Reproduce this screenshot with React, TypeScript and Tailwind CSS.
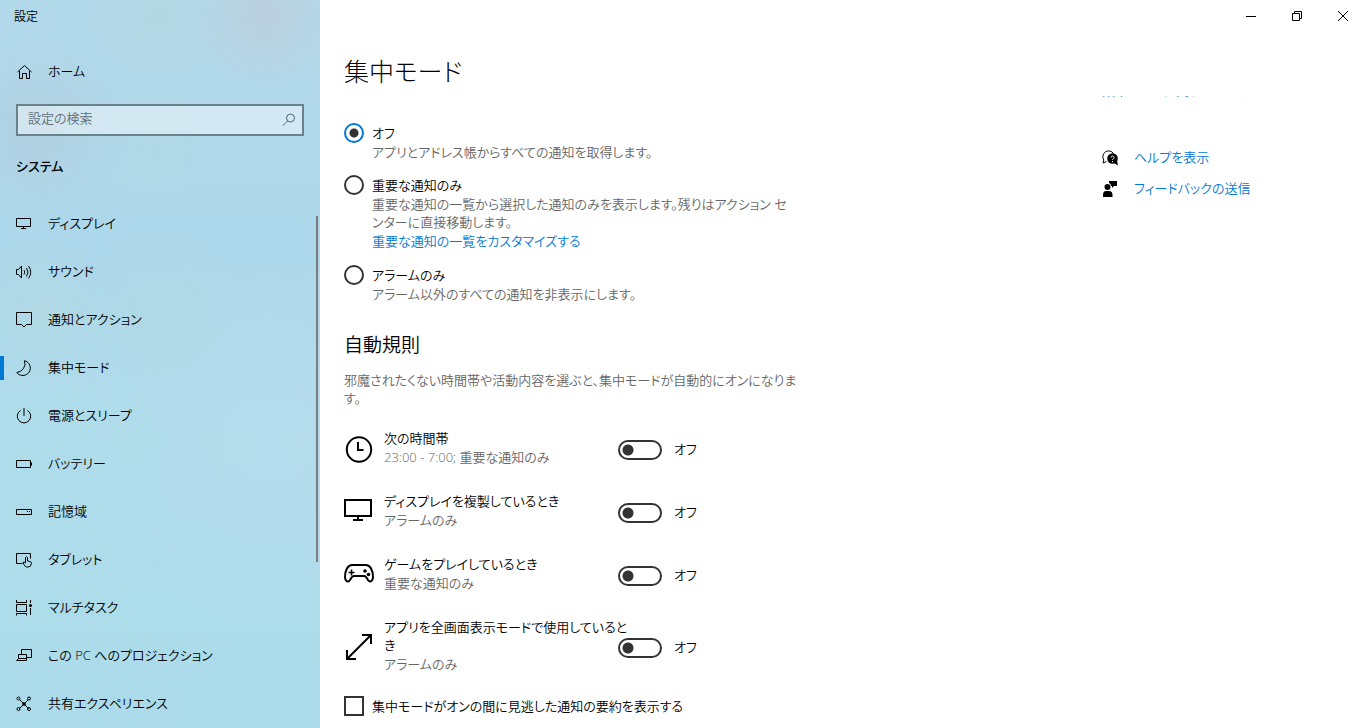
import type { ReactNode } from "react";

const svg = {
  fill: "none",
  stroke: "currentColor",
  "aria-hidden": true,
} as const;

function NavIcon({ children }: { children: ReactNode }) {
  return (
    <svg {...svg} width="16" height="16" viewBox="0 0 16 16" className="shrink-0 overflow-visible">
      {children}
    </svg>
  );
}

const navItems: { label: string; icon: ReactNode; active?: boolean }[] = [
  {
    label: "ディスプレイ",
    icon: <path d="M.5 2.5h14v8H.5zM7.500 10.500v2M5 12.500h5" />,
  },
  {
    label: "サウンド",
    icon: (
      <path d="M.5 5.500h2l3-3.500v12l-3-3.500h-2zM8 6q1.500 2 0 4.500M10.500 4q3 4 0 8.500M12.500 2q4.500 6 0 12.500" />
    ),
  },
  {
    label: "通知とアクション",
    icon: <path d="M.5.500h15v12h-5l-2.500 2.500-2.500-2.500h-5z" />,
  },
  {
    label: "集中モード",
    active: true,
    icon: <path d="M8.500.700A7.500 7.500 0 1 1 .800 12.500Q5 12 7.500 8.500T8.500.700z" />,
  },
  {
    label: "電源とスリープ",
    icon: <path d="M8 0v8M4.500 2.500a6.700 6.700 0 1 0 7 0" />,
  },
  {
    label: "バッテリー",
    icon: <path d="M.5 4.500h14v7H.5zM15.500 6.500v3" />,
  },
  {
    label: "記憶域",
    icon: <path d="M.5 5.500h15v5H.5zM11 7.500h1M13 7.500h1" />,
  },
  {
    label: "タブレット",
    icon: (
      <path d="M6.500 11.500h-6v-10h14v5M9.500 11V5.500q1-1.500 2 0V9l3 .700q1 .300 1 1.500-.200 4-4 4-2.300 0-3.500-2.500L7 10.500q1-1.200 2.500.500" />
    ),
  },
  {
    label: "マルチタスク",
    icon: (
      <>
        <path d="M.5 0v2.500h10V0M.5 4.500h10v7H.5zM.5 15.500v-2h10v2M14.500 0v3M14.500 8v7" />
        <circle cx="14.500" cy="5.500" r="1.500" fill="currentColor" stroke="none" />
      </>
    ),
  },
  {
    label: "この PC へのプロジェクション",
    icon: <path d="M5.500 6V1.500h10v8h-5M2.500 6.500h8v4h-8zM2.500 10.500l-2 2h10v-2" />,
  },
  {
    label: "共有エクスペリエンス",
    icon: (
      <>
        <path d="M3.500 3.500l9 9M12.500 3.500l-9 9" />
        <circle cx="2.500" cy="2.500" r="1.500" />
        <circle cx="13" cy="2.500" r="1.500" />
        <circle cx="2.500" cy="13" r="1.500" />
        <circle cx="13" cy="13" r="1.500" />
        <circle cx="8" cy="8" r="1.300" fill="currentColor" />
      </>
    ),
  },
];

const modes = [
  { id: "off", label: "オフ", text: <>アプリとアドレス帳からすべての通知を取得します。</> },
  {
    id: "priority",
    label: "重要な通知のみ",
    text: (
      <>
        重要な通知の一覧から選択した通知のみを表示します。残りはアクション セ
        <br />
        ンターに直接移動します。
      </>
    ),
    link: "重要な通知の一覧をカスタマイズする",
  },
  { id: "alarms", label: "アラームのみ", text: <>アラーム以外のすべての通知を非表示にします。</> },
];

const rules = [
  {
    id: "time",
    label: <>次の時間帯</>,
    sub: "23:00 - 7:00; 重要な通知のみ",
    icon: (
      <>
        <circle cx="15" cy="16.500" r="12.200" />
        <path d="M14 9v8h5.500" />
      </>
    ),
  },
  {
    id: "display",
    label: <>ディスプレイを複製しているとき</>,
    sub: "アラームのみ",
    icon: <path d="M1 4h26v16H1zM14 20v4M9 24h10" />,
  },
  {
    id: "game",
    label: <>ゲームをプレイしているとき</>,
    sub: "重要な通知のみ",
    icon: (
      <>
        <path d="M8 6h14c4 0 7 5 7 12 0 4-3 6-5 3-2-4-3-4-4-4H10c-1 0-2 0-4 4-2 3-5 1-5-3C1 11 4 6 8 6z" />
        <path d="M4.500 13.500h6M7.500 10.500v6" strokeWidth="1.600" />
        <circle cx="21" cy="12" r="1.800" fill="currentColor" stroke="none" />
        <circle cx="24.500" cy="15.500" r="1.800" fill="currentColor" stroke="none" />
      </>
    ),
  },
  {
    id: "fullscreen",
    label: (
      <>
        アプリを全画面表示モードで使用していると
        <br />き
      </>
    ),
    sub: "アラームのみ",
    icon: <path d="M3 28L27 4M18 4h9v9M3 19v9h9" />,
  },
];

function Sidebar() {
  return (
    <aside className="relative flex w-80 shrink-0 flex-col bg-[#afd9ea] bg-[radial-gradient(circle_at_265px_15px,#bbcfdd_0,transparent_75px),radial-gradient(circle_at_160px_15px,#b3d7e2_0,transparent_80px),radial-gradient(circle_at_35px_130px,#b0d0e1_0,transparent_90px),radial-gradient(circle_at_155px_150px,#b0d8e4_0,transparent_60px),radial-gradient(circle_at_40px_310px,#b1d9e5_0,transparent_70px),radial-gradient(circle_at_160px_310px,#b0d9e5_0,transparent_80px),radial-gradient(circle_at_270px_440px,#b5dcec_0,transparent_200px),linear-gradient(#b2d9ea,#add7ea_35%,#afdcea_60%,#abdbea)]">
      <div className="flex h-8 items-center pt-0.5 pl-3.5 text-xs">設定</div>
      <a href="#home" className="mt-4 flex h-12 items-center gap-4 pl-4">
        <svg {...svg} width="16" height="16" viewBox="-1 0 16 16">
          <path d="M.5 8l7-6.500 7 6.500M2.500 7v7.500h3V9.500h4v5h3V7" />
        </svg>
        ホーム
      </a>
      <div className="relative mx-4 mt-2">
        <input
          type="search"
          aria-label="設定の検索"
          placeholder="設定の検索"
          className="h-8 w-full border-2 border-[#6b818c] bg-white/45 px-2.5 pb-1 outline-none placeholder:text-[#5e6e76]"
        />
        <svg {...svg} width="14" height="14" viewBox="0 0 14 14" className="absolute top-[9px] right-2 text-[#54646c]">
          <circle cx="8.500" cy="5" r="4" />
          <path d="M5.600 8L.800 12.800" />
        </svg>
      </div>
      <h2 className="mt-[18px] pl-4 leading-6 font-medium">システム</h2>
      <nav className="mt-[22px]">
        {navItems.map((item) => (
          <a
            key={item.label}
            href="#settings"
            className={
              item.active
                ? "flex h-12 items-center bg-[linear-gradient(#0078d7,#0078d7)] bg-[length:4px_24px] bg-[position:left_center] bg-no-repeat pl-4"
                : "flex h-12 items-center pl-4"
            }
          >
            <NavIcon>{item.icon}</NavIcon>
            <span className="pl-4">{item.label}</span>
          </a>
        ))}
      </nav>
      <div className="absolute top-[216px] right-0.5 h-[346px] w-0.5 bg-[#7a7d80]" />
    </aside>
  );
}

function WindowButtons() {
  return (
    <div className="flex h-8 justify-end">
      <button type="button" aria-label="最小化" className="flex w-[46px] items-center justify-center">
        <svg {...svg} width="10" height="10">
          <path d="M0 5.500h10" />
        </svg>
      </button>
      <button type="button" aria-label="元に戻す" className="flex w-[46px] items-center justify-center">
        <svg {...svg} width="10" height="10">
          <path d="M.5 2.500h7v7h-7zM2.500 2.500v-2h7v7h-2" />
        </svg>
      </button>
      <button type="button" aria-label="閉じる" className="flex w-[46px] items-center justify-center">
        <svg {...svg} width="10" height="10">
          <path d="M0 0l10 10M10 0L0 10" />
        </svg>
      </button>
    </div>
  );
}

function Modes() {
  return (
    <div className="flex flex-col gap-3.5">
      {modes.map((mode) => (
        <div key={mode.id} className="flex gap-2">
          <input
            type="radio"
            name="mode"
            id={mode.id}
            defaultChecked={mode.id === "off"}
            className="size-5 shrink-0 appearance-none rounded-full border-2 border-[#333] checked:border-[#0078d7] checked:bg-[radial-gradient(circle,#333_4px,transparent_5px)]"
          />
          <div>
            <label htmlFor={mode.id} className="block leading-5">
              {mode.label}
            </label>
            <p className="leading-[18px] whitespace-nowrap text-[#666]">{mode.text}</p>
            {mode.link && (
              <a href="#customize" className="block leading-5 text-[#0078d7]">
                {mode.link}
              </a>
            )}
          </div>
        </div>
      ))}
    </div>
  );
}

function Rules() {
  return (
    <div className="mt-[22px] flex flex-col gap-[25px]">
      {rules.map((rule) => (
        <div key={rule.id} className="flex items-center">
          <svg {...svg} strokeWidth="2" width="30" height="30" viewBox="0 0 30 30" className="mr-2.5 shrink-0">
            {rule.icon}
          </svg>
          <div className="w-[234px] whitespace-nowrap">
            <label htmlFor={rule.id} className="block leading-[18px]">
              {rule.label}
            </label>
            <p className="leading-5 text-[#666]">{rule.sub}</p>
          </div>
          <div className="flex items-center gap-3 pt-1">
            <input
              type="checkbox"
              role="switch"
              id={rule.id}
              className="h-5 w-11 appearance-none rounded-full border-2 border-[#333] bg-[radial-gradient(circle_at_8px_8px,#333_5px,transparent_6px)]"
            />
            オフ
          </div>
        </div>
      ))}
    </div>
  );
}

function HelpLinks() {
  return (
    <aside className="w-[264px] shrink-0 text-[#0078d7]">
      {/* scrolled almost out of view under the page title */}
      <div className="flex h-0.5 items-end overflow-hidden">
        <a href="#faq" className="leading-4 whitespace-nowrap">
          集中モードに関するヘルプ
        </a>
      </div>
      <div className="mt-11 flex flex-col">
        <a href="#help" className="flex h-[31px] items-center gap-4">
          <svg width="16" height="16" viewBox="0 0 16 16" className="overflow-visible text-black" aria-hidden>
            <path d="M4.500 11.500L1 13l.800-3A5.300 5.300 0 1 1 11.500 3.500" fill="none" stroke="currentColor" />
            <circle cx="10.500" cy="8.500" r="5.300" fill="currentColor" />
            <path d="M12 13l4 2.500-1-5z" fill="currentColor" />
            <path d="M9 7.500c0-2 3-2 3 0 0 1.200-1.500 1.200-1.500 2.500M10.500 11v1.200" fill="none" stroke="white" />
          </svg>
          ヘルプを表示
        </a>
        <a href="#feedback" className="flex h-[31px] items-center gap-4">
          <svg width="16" height="16" viewBox="0 0 16 16" fill="currentColor" className="text-black" aria-hidden>
            <path d="M7 0h8v5h-3l-2 2V5H9Q9 2.500 7 2z" />
            <circle cx="5.500" cy="6" r="3" />
            <path d="M1 16v-2q0-4 3-4h3q3.500 0 3.500 4v2z" />
          </svg>
          フィードバックの送信
        </a>
      </div>
    </aside>
  );
}

export default function App() {
  return (
    <div className="flex min-h-screen bg-white font-['Open_Sans','Noto_Sans_CJK_JP',sans-serif] text-[13px] font-[350] text-black [font-feature-settings:'palt']">
      <Sidebar />
      <main className="flex min-w-0 flex-1 flex-col">
        <WindowButtons />
        <h1 className="mt-5 pl-6 text-[25px] leading-[38px] font-light">集中モード</h1>
        <div className="mt-1.5 flex justify-between pl-6">
          <section className="w-[450px] pt-[27px]">
            <Modes />
            <h2 className="mt-[29px] text-[19px] leading-[26px]">自動規則</h2>
            <p className="mt-[13px] leading-[18px] whitespace-nowrap text-[#666]">
              邪魔されたくない時間帯や活動内容を選ぶと、集中モードが自動的にオンになりま
              <br />
              す。
            </p>
            <Rules />
            <label className="mt-[22px] flex items-center gap-2 leading-5">
              <input type="checkbox" className="size-5 appearance-none border-2 border-[#333]" />
              集中モードがオンの間に見逃した通知の要約を表示する
            </label>
          </section>
          <HelpLinks />
        </div>
      </main>
    </div>
  );
}
